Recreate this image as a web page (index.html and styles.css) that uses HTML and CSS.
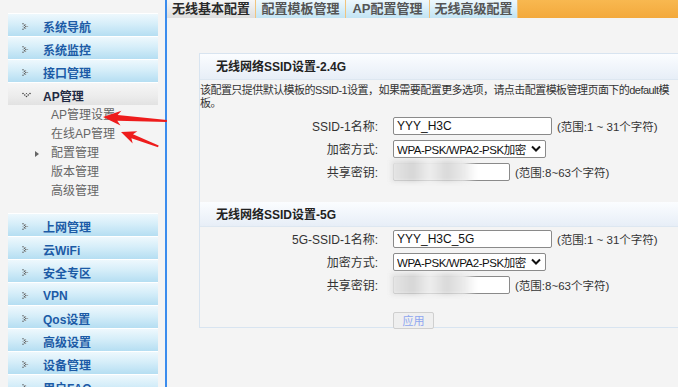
FILE: index.html
```html
<!DOCTYPE html>
<html lang="zh-CN">
<head>
    <meta charset="UTF-8">
    <title>无线基本配置</title>
    <link rel="stylesheet" href="styles.css">
</head>
<body>
    <!-- 左侧菜单 -->
    <div class="sidebar">
        <ul class="menu">
            <li class="menu-item"><i class="ico"></i>系统导航</li>
            <li class="menu-item"><i class="ico"></i>系统监控</li>
            <li class="menu-item"><i class="ico"></i>接口管理</li>
            <li class="menu-item open"><i class="ico down"></i>AP管理</li>
            <li class="sub-item">AP管理设置</li>
            <li class="sub-item">在线AP管理</li>
            <li class="sub-item"><i class="sub-ico"></i>配置管理</li>
            <li class="sub-item">版本管理</li>
            <li class="sub-item">高级管理</li>
            <li class="menu-item first-after"><i class="ico"></i>上网管理</li>
            <li class="menu-item"><i class="ico"></i>云WiFi</li>
            <li class="menu-item"><i class="ico"></i>安全专区</li>
            <li class="menu-item"><i class="ico"></i>VPN</li>
            <li class="menu-item"><i class="ico"></i>Qos设置</li>
            <li class="menu-item"><i class="ico"></i>高级设置</li>
            <li class="menu-item"><i class="ico"></i>设备管理</li>
            <li class="menu-item"><i class="ico"></i>用户FAQ</li>
        </ul>
    </div>

    <!-- 主区域 -->
    <div class="main">
        <div class="tabs">
            <div class="tab active">无线基本配置</div>
            <div class="tab">配置模板管理</div>
            <div class="tab">AP配置管理</div>
            <div class="tab">无线高级配置</div>
        </div>

        <div class="panel">
            <div class="panel-head">无线网络SSID设置-2.4G</div>
            <p class="desc">该配置只提供默认模板的SSID-1设置，如果需要配置更多选项，请点击配置模板管理页面下的default模板。</p>
            <div class="form-row">
                <label class="lbl">SSID-1名称:</label>
                <input class="txt long" type="text" value="YYY_H3C">
                <span class="hint">(范围:1 ~ 31个字符)</span>
            </div>
            <div class="form-row">
                <label class="lbl">加密方式:</label>
                <div class="sel"><span class="sel-text">WPA-PSK/WPA2-PSK加密</span><svg width="10" height="7" viewBox="0 0 10 7"><path d="M1 1.5 L5 5.5 L9 1.5" fill="none" stroke="#111" stroke-width="2"/></svg></div>
            </div>
            <div class="form-row">
                <label class="lbl">共享密钥:</label>
                <div class="secret">
                    <input class="txt short" type="text" value="">
                    <span class="smudge"></span>
                </div>
                <span class="hint">(范围:8~63个字符)</span>
            </div>

            <div class="panel-head second">无线网络SSID设置-5G</div>
            <div class="form-row">
                <label class="lbl">5G-SSID-1名称:</label>
                <input class="txt long" type="text" value="YYY_H3C_5G">
                <span class="hint">(范围:1 ~ 31个字符)</span>
            </div>
            <div class="form-row">
                <label class="lbl">加密方式:</label>
                <div class="sel"><span class="sel-text">WPA-PSK/WPA2-PSK加密</span><svg width="10" height="7" viewBox="0 0 10 7"><path d="M1 1.5 L5 5.5 L9 1.5" fill="none" stroke="#111" stroke-width="2"/></svg></div>
            </div>
            <div class="form-row">
                <label class="lbl">共享密钥:</label>
                <div class="secret">
                    <input class="txt short" type="text" value="">
                    <span class="smudge"></span>
                </div>
                <span class="hint">(范围:8~63个字符)</span>
            </div>

            <div class="actions">
                <button class="btn">应用</button>
            </div>
        </div>
    </div>

    <!-- 标注箭头 -->
    <svg class="marks" width="678" height="387" viewBox="0 0 678 387">
        <polygon transform="translate(103 117) rotate(3.6)" fill="#ee1c1c"
                 points="0,0 18,-7.5 14.5,-2.8 64,-1.1 64,1.1 14.5,2.8 18,7.5"/>
        <polygon transform="translate(121 132) rotate(21)" fill="#ee1c1c"
                 points="0,0 15,-6.5 12,-2.2 40,-0.9 40,0.9 12,2.2 15,6.5"/>
    </svg>
</body>
</html>
```

FILE: styles.css
```css
body {
    margin: 0;
    background-color: #f4f4f4;
    font-family: "Liberation Sans", "Noto Sans CJK SC", sans-serif;
    font-size: 12px;
    color: #333;
    display: flex;
    height: 387px;
    overflow: hidden;
}
.sidebar {
    width: 158px;
    padding: 13px 0 0 8px;
    box-sizing: border-box;
    margin-right: 7px;
    flex-shrink: 0;
}
.main {
    flex: 1;
    border-left: 2px solid #3b8ced;
    overflow: hidden;
}
.menu {
    list-style: none;
    margin: 0;
    padding: 0;
}
.menu-item {
    height: 23px;
    box-sizing: border-box;
    border-top: 1px solid #ffffff;
    padding: 3px 0 0 14px;
    display: flex;
    align-items: center;
    background: linear-gradient(to bottom, #eef8fd 0%, #d6eef9 45%, #b5def2 100%);
    color: #1c5ba6;
    font-weight: bold;
}
.menu-item.open {
    background: linear-gradient(to bottom, #f6f6f6 0%, #ececec 60%, #e2e2e2 100%);
    color: #1f2a44;
}
.menu-item.first-after {
    margin-top: 13px;
}
.ico {
    width: 7px;
    height: 7px;
    margin-right: 14px;
    flex-shrink: 0;
    background: url("data:image/svg+xml,%3Csvg xmlns='http://www.w3.org/2000/svg' width='7' height='7'%3E%3Cg fill='%23555'%3E%3Ccircle cx='1' cy='0.8' r='0.7'/%3E%3Ccircle cx='2.4' cy='2.2' r='0.7'/%3E%3Ccircle cx='3.8' cy='3.5' r='0.7'/%3E%3Ccircle cx='2.4' cy='4.8' r='0.7'/%3E%3Ccircle cx='1' cy='6.2' r='0.7'/%3E%3C/g%3E%3Cg fill='%23999'%3E%3Ccircle cx='3.6' cy='1.6' r='0.6'/%3E%3Ccircle cx='5.6' cy='3.5' r='0.6'/%3E%3Ccircle cx='3.6' cy='5.4' r='0.6'/%3E%3Ccircle cx='1' cy='3.5' r='0.6'/%3E%3C/g%3E%3C/svg%3E") no-repeat;
}
.ico.down {
    width: 9px;
    margin-right: 12px;
    background: url("data:image/svg+xml,%3Csvg xmlns='http://www.w3.org/2000/svg' width='9' height='7'%3E%3Cg fill='%23444'%3E%3Ccircle cx='1' cy='1.5' r='0.8'/%3E%3Ccircle cx='2.8' cy='3' r='0.8'/%3E%3Ccircle cx='4.5' cy='4.5' r='0.8'/%3E%3Ccircle cx='6.2' cy='3' r='0.8'/%3E%3Ccircle cx='8' cy='1.5' r='0.8'/%3E%3Ccircle cx='4.5' cy='1.5' r='0.6'/%3E%3C/g%3E%3C/svg%3E") no-repeat;
}
.sub-item {
    height: 19px;
    line-height: 21px;
    padding-left: 43px;
    color: #666;
    position: relative;
}
.sub-ico {
    position: absolute;
    left: 27px;
    top: 8px;
    width: 0;
    height: 0;
    border-left: 4px solid #666;
    border-top: 3px solid transparent;
    border-bottom: 3px solid transparent;
}
.tabs {
    display: flex;
    height: 18px;
    background: linear-gradient(to bottom, #f8b850, #f3a93c);
}
.tab {
    line-height: 18px;
    font-size: 13px;
    font-weight: bold;
    color: #555;
    text-align: center;
    background: linear-gradient(to bottom, #eef8fd, #c2e4f4);
    border-right: 1px solid #f1c47e;
}
.tab:nth-child(1) { width: 88px; }
.tab:nth-child(2) { width: 89px; }
.tab:nth-child(3) { width: 83px; }
.tab:nth-child(4) { width: 87px; }
.tab.active {
    background: linear-gradient(to bottom, #f6f6f6, #dedede);
    color: #2a2a2a;
}
.panel {
    margin: 35px 0 0 32px;
    width: 520px;
    height: 275px;
    border: 1px solid #d8e4f0;
    box-sizing: border-box;
}
.panel-head {
    height: 25px;
    line-height: 27px;
    padding-left: 16px;
    font-weight: bold;
    font-size: 12px;
    color: #222;
    background: linear-gradient(to bottom, #fbfdff, #e7eef7);
    border-bottom: 1px solid #dde7f1;
}
.panel-head.second {
    margin-top: 19px;
    height: 24px;
}
.desc {
    margin: 4px 0 4px 0;
    width: 475px;
    line-height: 13px;
    font-size: 11px;
    letter-spacing: -0.55px;
    color: #333;
}
.form-row {
    display: flex;
    align-items: center;
    height: 23px;
}
.lbl {
    width: 178px;
    text-align: right;
    margin-right: 15px;
    font-size: 12px;
    color: #333;
}
.txt {
    height: 18px;
    box-sizing: border-box;
    border: 1px solid #8a8a8a;
    border-radius: 2px;
    padding: 0 3px;
    font-family: "Liberation Sans", sans-serif;
    font-size: 12px;
    background: #fff;
    color: #111;
    margin: 0;
}
.txt.long { width: 159px; }
.txt.short { width: 117px; }
.hint {
    margin-left: 5px;
    font-size: 11.5px;
    color: #333;
}
.sel {
    width: 153px;
    height: 18px;
    box-sizing: border-box;
    border: 1px solid #8a8a8a;
    border-radius: 2px;
    background: #fff;
    padding: 0 4px 0 3px;
    display: flex;
    align-items: center;
    gap: 3px;
    font-size: 11.5px;
    color: #111;
    white-space: nowrap;
}
.sel-text {
    flex: 1;
    overflow: hidden;
    letter-spacing: -0.45px;
}
.sel svg {
    flex-shrink: 0;
}
.secret {
    position: relative;
    height: 18px;
}
.smudge {
    position: absolute;
    left: -2px;
    top: -3px;
    width: 86px;
    height: 22px;
    background: linear-gradient(to right, #e6e6e6 0%, #d6d6d6 25%, #eeeeee 45%, #d9d9d9 65%, #ebebeb 85%, rgba(255,255,255,0) 100%);
    filter: blur(2px);
}
.actions {
    padding: 16px 0 0 193px;
}
.btn {
    width: 41px;
    height: 17px;
    padding: 0;
    font-family: "Noto Sans CJK SC", sans-serif;
    font-size: 11px;
    line-height: 15px;
    color: #8ea6f0;
    background: #efefef;
    border: 1px solid #cfcfcf;
    border-radius: 2px;
}
.marks {
    position: absolute;
    left: 0;
    top: 0;
    pointer-events: none;
}
```
